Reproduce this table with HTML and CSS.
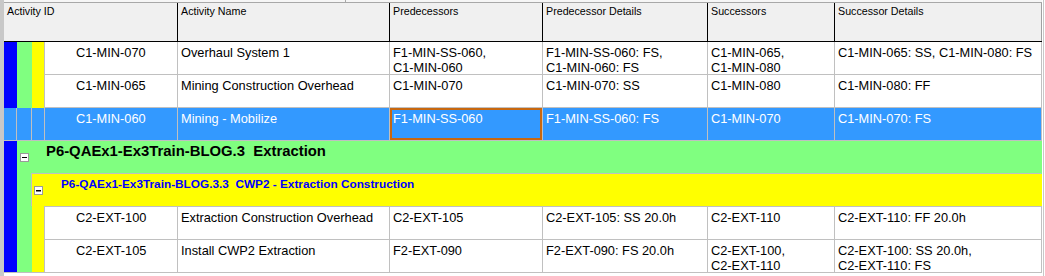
FILE: index.html
```html
<!DOCTYPE html>
<html>
<head>
<meta charset="utf-8">
<link rel="stylesheet" href="styles.css">
</head>
<body>
<div class="frame">
  <div class="edge-left"></div>
  <div class="grid">
    <div class="topbar"><div class="tab"></div></div>
    <div class="head">
      <div class="hcell">Activity ID</div>
      <div class="hcell">Activity Name</div>
      <div class="hcell">Predecessors</div>
      <div class="hcell">Predecessor Details</div>
      <div class="hcell">Successors</div>
      <div class="hcell last">Successor Details</div>
    </div>

    <div class="row">
      <div class="band blue"></div><div class="band green"></div><div class="band yellow"></div>
      <div class="cell id">C1-MIN-070</div>
      <div class="cell">Overhaul System 1</div>
      <div class="cell">F1-MIN-SS-060,<br>C1-MIN-060</div>
      <div class="cell">F1-MIN-SS-060: FS,<br>C1-MIN-060: FS</div>
      <div class="cell">C1-MIN-065,<br>C1-MIN-080</div>
      <div class="cell">C1-MIN-065: SS, C1-MIN-080: FS</div>
    </div>

    <div class="row">
      <div class="band blue"></div><div class="band green"></div><div class="band yellow"></div>
      <div class="cell id">C1-MIN-065</div>
      <div class="cell">Mining Construction Overhead</div>
      <div class="cell">C1-MIN-070</div>
      <div class="cell">C1-MIN-070: SS</div>
      <div class="cell">C1-MIN-080</div>
      <div class="cell">C1-MIN-080: FF</div>
    </div>

    <div class="row selected">
      <div class="band blue"></div><div class="band green"></div><div class="band yellow"></div>
      <div class="cell id">C1-MIN-060</div>
      <div class="cell">Mining - Mobilize</div>
      <div class="cell focus">F1-MIN-SS-060</div>
      <div class="cell">F1-MIN-SS-060: FS</div>
      <div class="cell">C1-MIN-070</div>
      <div class="cell">C1-MIN-070: FS</div>
    </div>

    <div class="row">
      <div class="band blue"></div>
      <div class="group lvl1">
        <svg class="toggle" width="9" height="9" viewBox="0 0 9 9"><rect x="0.5" y="0.5" width="8" height="8" fill="#fff" stroke="#9a9a9a"/><rect x="2" y="4" width="5" height="1" fill="#000"/></svg>
        <span class="title">P6-QAEx1-Ex3Train-BLOG.3  Extraction</span>
      </div>
    </div>

    <div class="row">
      <div class="band blue"></div><div class="band green"></div>
      <div class="group lvl2">
        <svg class="toggle" width="9" height="9" viewBox="0 0 9 9"><rect x="0.5" y="0.5" width="8" height="8" fill="#fff" stroke="#9a9a9a"/><rect x="2" y="4" width="5" height="1.5" fill="#000"/></svg>
        <span class="title">P6-QAEx1-Ex3Train-BLOG.3.3  CWP2 - Extraction Construction</span>
      </div>
    </div>

    <div class="row">
      <div class="band blue"></div><div class="band green"></div><div class="band yellow"></div>
      <div class="cell id">C2-EXT-100</div>
      <div class="cell">Extraction Construction Overhead</div>
      <div class="cell">C2-EXT-105</div>
      <div class="cell">C2-EXT-105: SS 20.0h</div>
      <div class="cell">C2-EXT-110</div>
      <div class="cell">C2-EXT-110: FF 20.0h</div>
    </div>

    <div class="row last">
      <div class="band blue"></div><div class="band green"></div><div class="band yellow"></div>
      <div class="cell id">C2-EXT-105</div>
      <div class="cell">Install CWP2 Extraction</div>
      <div class="cell">F2-EXT-090</div>
      <div class="cell">F2-EXT-090: FS 20.0h</div>
      <div class="cell">C2-EXT-100,<br>C2-EXT-110</div>
      <div class="cell">C2-EXT-100: SS 20.0h,<br>C2-EXT-110: FS</div>
    </div>
  </div>
  <div class="edge-right"></div>
</div>
</body>
</html>
```

FILE: styles.css
```css
* {
  box-sizing: border-box;
}

html,
body {
  margin: 0;
  padding: 0;
}

body {
  width: 1045px;
  height: 276px;
  overflow: hidden;
  background: #fff;
  color: #000;
  font-family: "Liberation Sans", Arial, sans-serif;
}

.frame {
  display: flex;
  height: 276px;
}

.edge-left {
  flex: none;
  width: 4px;
  background: #c8c8c8;
}

.edge-right {
  flex: none;
  width: 3px;
  background: #c8c8c8;
  border-left: 1px solid #fff;
  border-right: 1px solid #fff;
}

.grid {
  flex: none;
  width: 1038px;
  display: flex;
  flex-direction: column;
}

.topbar {
  height: 3px;
  background: #f6f6f6;
  border-bottom: 1px solid #a8a8a8;
}

.tab {
  width: 342px;
  height: 2px;
  border-right: 1px solid #a8a8a8;
}

.head {
  display: grid;
  grid-template-columns: 174px 212px 153px 165px 127px 207px;
  height: 39px;
  background: #f0f0f0;
  border-bottom: 1px solid #000;
}

.hcell {
  border-right: 1px solid #000;
  padding: 2px 3px 0;
  font-size: 10.7px;
  line-height: 13px;
  white-space: nowrap;
}

.hcell.last {
  border-right-color: #a0a0a0;
}

.row {
  display: grid;
  grid-template-columns: 13px 15px 12px 134px 212px 153px 165px 127px 207px;
  height: 33px;
}

.blue {
  background: #0000ff;
}

.green {
  background: #80ff80;
}

.yellow {
  background: #ffff00;
}

.cell {
  border-right: 1px solid #c0c0c0;
  border-bottom: 1px solid #c0c0c0;
  padding: 3px 3px 0;
  font-size: 12.8px;
  line-height: 15px;
  white-space: nowrap;
  overflow: hidden;
}

.cell.id {
  border-left: 1px solid #c0c0c0;
  padding-left: 31px;
}

.row.selected {
  background: #3399ff;
  color: #fff;
}

.row.selected .band {
  background: #3399ff;
  border-bottom: 1px solid #c0c0c0;
}

.row.selected .blue,
.row.selected .green {
  border-right: 1px solid #c0c0c0;
}

.focus {
  box-shadow: inset 0 0 0 2px #c8670f;
}

.row.last .band {
  border-bottom: 1px solid #c0c0c0;
}

.group {
  display: flex;
  align-items: flex-start;
  font-weight: bold;
}

.group .title {
  white-space: pre;
}

.lvl1 {
  grid-column: 2 / -1;
  background: #80ff80;
  padding: 1px 0 0 3px;
}

.lvl1 .toggle {
  margin-top: 11px;
}

.lvl1 .title {
  margin-left: 17px;
  font-size: 14.86px;
  line-height: 18px;
}

.lvl2 {
  grid-column: 3 / -1;
  background:
    linear-gradient(#c0c0c0, #c0c0c0) 12px 100% / calc(100% - 12px) 1px no-repeat,
    #ffff00;
  box-shadow: -1px -1px 0 #c0c0c0;
  padding: 3px 0 0 2px;
}

.lvl2 .toggle {
  margin-top: 9px;
}

.lvl2 .title {
  margin-left: 18px;
  font-size: 11.8px;
  line-height: 14px;
  color: #0000ff;
}

.toggle {
  flex: none;
  display: block;
}
```
